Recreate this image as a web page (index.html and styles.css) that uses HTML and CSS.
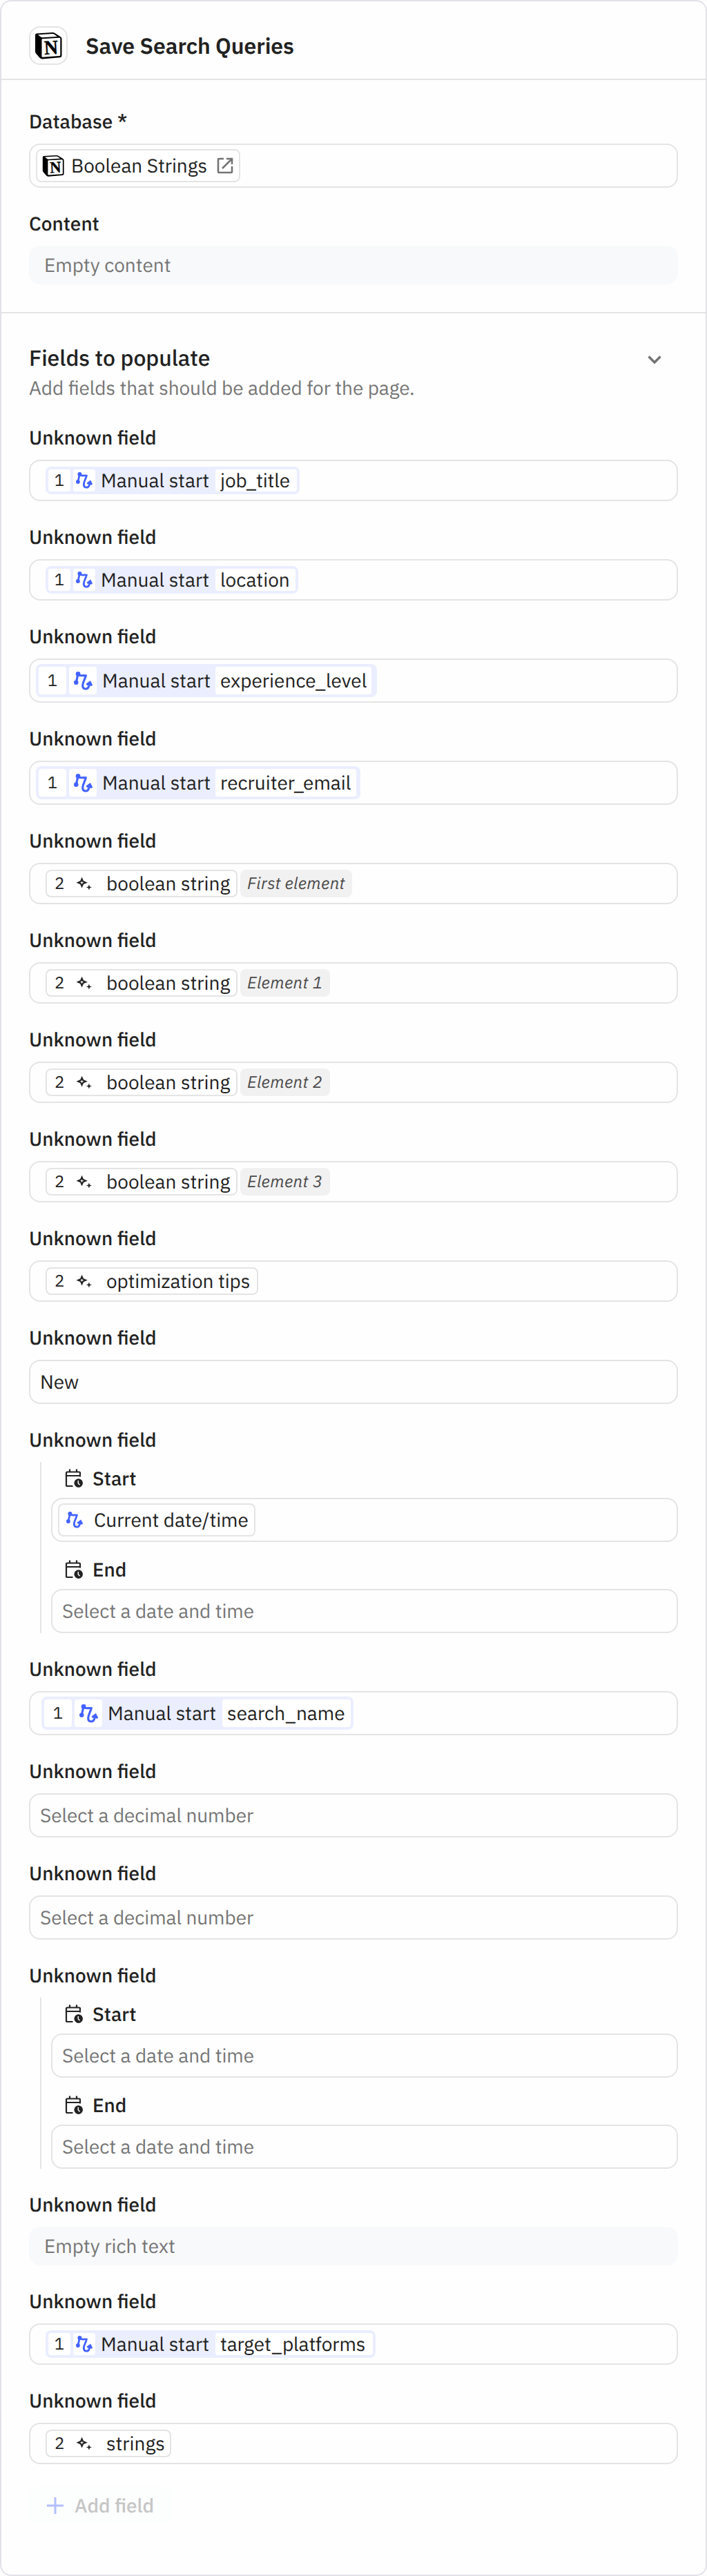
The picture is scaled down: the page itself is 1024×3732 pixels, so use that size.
FILE: index.html
```
<!DOCTYPE html>
<html lang="en">
<head>
    <meta charset="UTF-8">
    <meta name="viewport" content="width=device-width, initial-scale=1.0">
    <title>Save Search Queries</title>
    <link rel="stylesheet" href="styles.css">
</head>
<body>
    <div class="card">
        <header class="card-header">
            <div class="app-icon">
                <svg width="40" height="41" viewBox="0 0 40 41">
                    <use href="#notion"/>
                    <text x="14" y="32.500" class="notion-letter" textLength="20" lengthAdjust="spacingAndGlyphs" transform="rotate(-3 24 22)">N</text>
                </svg>
            </div>
            <h1>Save Search Queries</h1>
        </header>

        <section class="section">
            <div class="field">
                <div class="label">Database *</div>
                <div class="input">
                    <div class="chip database">
                        <svg width="32" height="33" viewBox="0 0 40 41">
                            <use href="#notion"/>
                            <text x="14" y="32.500" class="notion-letter" textLength="20" lengthAdjust="spacingAndGlyphs" transform="rotate(-3 24 22)">N</text>
                        </svg>
                        <span>Boolean Strings</span>
                        <svg class="external" width="24" height="24" viewBox="0 0 24 24"><path d="M10 2 H3 Q2 2 2 3 V21 Q2 22 3 22 H21 Q22 22 22 21 V13 M14 2 H22 V10 M21.500 2.500 L8 16"/></svg>
                    </div>
                </div>
            </div>
            <div class="field">
                <div class="label">Content</div>
                <div class="empty">Empty content</div>
            </div>
        </section>

        <section class="section">
            <div class="section-head">
                <div>
                    <h2>Fields to populate</h2>
                    <p>Add fields that should be added for the page.</p>
                </div>
                <svg class="chevron" width="20" height="14" viewBox="0 0 20 14"><path d="M1.500 1.500 L10 10 L18.500 1.500"/></svg>
            </div>

            <div class="field">
                <div class="label">Unknown field</div>
                <div class="input small">
                    <div class="token">
                        <span class="num">1</span>
                        <span class="ico"><svg width="24" height="28"><use href="#route"/></svg></span>
                        <span class="name">Manual start</span>
                        <span class="value job-title">job_title</span>
                    </div>
                </div>
            </div>
            <div class="field">
                <div class="label">Unknown field</div>
                <div class="input small">
                    <div class="token">
                        <span class="num">1</span>
                        <span class="ico"><svg width="24" height="28"><use href="#route"/></svg></span>
                        <span class="name">Manual start</span>
                        <span class="value location">location</span>
                    </div>
                </div>
            </div>
            <div class="field">
                <div class="label">Unknown field</div>
                <div class="input">
                    <div class="token large">
                        <span class="num">1</span>
                        <span class="ico"><svg width="27" height="31"><use href="#route"/></svg></span>
                        <span class="name">Manual start</span>
                        <span class="value experience">experience_level</span>
                    </div>
                </div>
            </div>
            <div class="field">
                <div class="label">Unknown field</div>
                <div class="input">
                    <div class="token large">
                        <span class="num">1</span>
                        <span class="ico"><svg width="27" height="31"><use href="#route"/></svg></span>
                        <span class="name">Manual start</span>
                        <span class="value recruiter">recruiter_email</span>
                    </div>
                </div>
            </div>

            <div class="field">
                <div class="label">Unknown field</div>
                <div class="input small">
                    <div class="chip result">
                        <span class="num">2</span>
                        <svg width="22" height="19"><use href="#sparkle"/></svg>
                        <span>boolean string</span>
                    </div>
                    <span class="badge first">First element</span>
                </div>
            </div>
            <div class="field">
                <div class="label">Unknown field</div>
                <div class="input small">
                    <div class="chip result">
                        <span class="num">2</span>
                        <svg width="22" height="19"><use href="#sparkle"/></svg>
                        <span>boolean string</span>
                    </div>
                    <span class="badge">Element 1</span>
                </div>
            </div>
            <div class="field">
                <div class="label">Unknown field</div>
                <div class="input small">
                    <div class="chip result">
                        <span class="num">2</span>
                        <svg width="22" height="19"><use href="#sparkle"/></svg>
                        <span>boolean string</span>
                    </div>
                    <span class="badge">Element 2</span>
                </div>
            </div>
            <div class="field">
                <div class="label">Unknown field</div>
                <div class="input small">
                    <div class="chip result">
                        <span class="num">2</span>
                        <svg width="22" height="19"><use href="#sparkle"/></svg>
                        <span>boolean string</span>
                    </div>
                    <span class="badge">Element 3</span>
                </div>
            </div>
            <div class="field">
                <div class="label">Unknown field</div>
                <div class="input small">
                    <div class="chip result tips">
                        <span class="num">2</span>
                        <svg width="22" height="19"><use href="#sparkle"/></svg>
                        <span>optimization tips</span>
                    </div>
                </div>
            </div>

            <div class="field">
                <div class="label">Unknown field</div>
                <div class="input text">New</div>
            </div>

            <div class="field">
                <div class="label">Unknown field</div>
                <div class="range">
                    <div>
                        <div class="sub-label"><svg width="27" height="27"><use href="#calendar"/></svg>Start</div>
                        <div class="input">
                            <div class="chip date">
                                <svg width="24" height="24"><use href="#route"/></svg>
                                <span>Current date/time</span>
                            </div>
                        </div>
                    </div>
                    <div>
                        <div class="sub-label"><svg width="27" height="27"><use href="#calendar"/></svg>End</div>
                        <div class="input text placeholder">Select a date and time</div>
                    </div>
                </div>
            </div>

            <div class="field">
                <div class="label">Unknown field</div>
                <div class="input">
                    <div class="token large inset">
                        <span class="num">1</span>
                        <span class="ico"><svg width="27" height="31"><use href="#route"/></svg></span>
                        <span class="name">Manual start</span>
                        <span class="value search-name">search_name</span>
                    </div>
                </div>
            </div>
            <div class="field">
                <div class="label">Unknown field</div>
                <div class="input text placeholder">Select a decimal number</div>
            </div>
            <div class="field">
                <div class="label">Unknown field</div>
                <div class="input text placeholder">Select a decimal number</div>
            </div>

            <div class="field">
                <div class="label">Unknown field</div>
                <div class="range">
                    <div>
                        <div class="sub-label"><svg width="27" height="27"><use href="#calendar"/></svg>Start</div>
                        <div class="input text placeholder">Select a date and time</div>
                    </div>
                    <div>
                        <div class="sub-label"><svg width="27" height="27"><use href="#calendar"/></svg>End</div>
                        <div class="input text placeholder">Select a date and time</div>
                    </div>
                </div>
            </div>

            <div class="field">
                <div class="label">Unknown field</div>
                <div class="empty">Empty rich text</div>
            </div>
            <div class="field">
                <div class="label">Unknown field</div>
                <div class="input small">
                    <div class="token">
                        <span class="num">1</span>
                        <span class="ico"><svg width="24" height="28"><use href="#route"/></svg></span>
                        <span class="name">Manual start</span>
                        <span class="value platforms">target_platforms</span>
                    </div>
                </div>
            </div>
            <div class="field">
                <div class="label">Unknown field</div>
                <div class="input small">
                    <div class="chip result strings">
                        <span class="num">2</span>
                        <svg width="22" height="19"><use href="#sparkle"/></svg>
                        <span>strings</span>
                    </div>
                </div>
            </div>

            <button class="add-btn" disabled>
                <svg width="24" height="24" viewBox="0 0 24 24"><path d="M12 0 V24 M0 12 H24"/></svg>
                <span>Add field</span>
            </button>
        </section>
    </div>

    <!-- icons -->
    <svg width="0" height="0">
        <symbol id="notion" viewBox="0 0 40 41">
            <path d="M1 4.500 Q1 2.800 3 2.500 L26 1 Q28 .9 29.500 2 L38 7.500 Q39.500 8.500 39.500 10.500 V34.500 Q39.500 37 37 37.300 L11.500 39.500 Q9 39.700 7.500 37.700 L2 31.500 Q1 30.200 1 28.500 Z" fill="#000"/>
            <path d="M5 4.300 L26 2.900 Q27.300 2.900 28.300 3.600 L33 6.900 L12 8.300 Q10.300 8.400 9 7.500 Z" fill="#fff"/>
            <path d="M10.500 11.500 Q10.500 10.300 11.700 10.200 L36 8.800 Q37.300 8.800 37.300 10 V33.500 Q37.300 35 36 35.100 L12 36.800 Q10.500 36.900 10.500 35.400 Z" fill="#fff"/>
        </symbol>
        <symbol id="route" viewBox="0 0 24 24">
            <circle cx="5.400" cy="3" r="3"/>
            <circle cx="2.900" cy="14" r="2.900"/>
            <path d="M5.300 3 L3 14 M5.300 3.600 C8.500 6.600 10.500 4.200 15.300 5.200 C14.500 9.500 11.400 13.500 11.300 17.700 C11.300 23.300 17.800 23.700 19.300 18.800 L20.300 14.800 M16.300 16.900 L20.700 13.700 L23 18.300" fill="none" stroke="currentColor" stroke-width="2.800"/>
        </symbol>
        <symbol id="sparkle" viewBox="0 0 22 19">
            <path d="M7.600 2.500 L9.200 6.100 L13 7.700 L9.200 9.300 L7.600 12.900 L6 9.300 L2.200 7.700 L6 6.100 Z" fill="none" stroke="currentColor" stroke-width="2.200"/>
            <path d="M17.900 10.500 L19 13.400 L22 14.500 L19 15.600 L17.900 18.500 L16.800 15.600 L13.800 14.500 L16.800 13.400 Z"/>
        </symbol>
        <symbol id="calendar" viewBox="0 0 27 27">
            <path d="M11.500 25 H3.500 Q2 25 2 23.500 V6 Q2 4.500 3.500 4.500 H20.500 Q22 4.500 22 6 V11.500 M2 10 H22 M7 .5 V4.500 M17 .5 V4.500" fill="none" stroke="currentColor" stroke-width="2.200"/>
            <circle cx="19.700" cy="20.600" r="6.300"/>
            <path d="M19.300 17 V21 L21.600 23.300" fill="none" stroke="#fff" stroke-width="1.500"/>
        </symbol>
    </svg>
</body>
</html>
```
FILE: styles.css
```
* {
    box-sizing: border-box;
}
body {
    margin: 0;
    background-color: #fff;
    font-family: "IBM Plex Sans", Roboto, sans-serif;
    font-size: 28px;
    line-height: 40px;
    color: #222;
    text-rendering: geometricPrecision;
    font-feature-settings: "liga" 1;
}
svg {
    display: block;
    flex: none;
    fill: currentColor;
}
.notion-letter {
    font-family: "Liberation Serif", serif;
    font-weight: bold;
    font-size: 29px;
    fill: #000;
    stroke: #000;
    stroke-width: 0.5px;
}
.card {
    height: 3732px;
    border: 2px solid #e2e1ea;
    border-radius: 16px;
    background-color: #fefefe;
}
.card-header {
    display: flex;
    align-items: center;
    gap: 26px;
    height: 114px;
    padding: 16px 40px 0;
    border-bottom: 2px solid #e4e4e4;
}
.app-icon {
    display: flex;
    align-items: center;
    justify-content: center;
    width: 56px;
    height: 56px;
    border: 2px solid #e4e4e4;
    border-radius: 16px;
}
h1, h2, p {
    margin: 0;
}
h1 {
    font-size: 32px;
    font-weight: 600;
    letter-spacing: -0.12px;
}
.section {
    display: flex;
    flex-direction: column;
    gap: 32px;
    padding: 40px;
}
.section + .section {
    border-top: 2px solid #e4e4e4;
}
.section-head {
    display: flex;
    justify-content: space-between;
}
h2 {
    font-size: 32px;
    font-weight: 500;
    line-height: 48px;
    letter-spacing: -0.05px;
}
.section-head p {
    color: #767676;
    letter-spacing: -0.09px;
}
.chevron {
    margin: 21px 24px 0 0;
}
.chevron path, .external path {
    fill: none;
    stroke: #737373;
    stroke-width: 3.4;
}
.external path {
    stroke-width: 2.6;
}
.label {
    margin-bottom: 12px;
    font-weight: 500;
}
.input {
    display: flex;
    align-items: center;
    gap: 4px;
    height: 64px;
    padding: 0 8px;
    border: 2px solid #e4e4e4;
    border-radius: 16px;
}
.input.small {
    height: 60px;
    padding: 0 22px;
}
.input.text {
    padding: 0 14px;
    letter-spacing: -0.09px;
}
.input.placeholder, .empty {
    color: #767676;
}
.empty {
    height: 56px;
    padding: 8px 22px;
    border-radius: 16px;
    background-color: #f8f9fb;
}

/* step output tokens */
.token {
    display: flex;
    gap: 4px;
    height: 40px;
    padding: 4px;
    border-radius: 8px;
    background-color: #ebeeff;
    line-height: 32px;
}
.token span {
    flex: none;
}
.token .num, .ico, .value {
    border-radius: 4px;
    background-color: #fff;
}
.num {
    font-size: 24px;
    text-align: center;
}
.token .num, .ico {
    width: 32px;
}
.token .num {
    line-height: 30px;
}
.ico {
    display: flex;
    align-items: center;
    justify-content: center;
    color: #4362ff;
}
.name {
    width: 166px;
    padding-left: 4px;
}
.value {
    padding-left: 7px;
}
.token.large {
    height: 48px;
    line-height: 40px;
}
.large .num, .large .ico {
    width: 40px;
}
.large .num {
    line-height: 38px;
}
.large .name {
    width: 164px;
}
.token.inset {
    margin-left: 8px;
}
.inset .name {
    width: 166px;
}
.job-title {
    width: 118px;
    letter-spacing: -0.1px;
}
.location {
    width: 116px;
}
.experience {
    width: 226px;
    margin-right: 4px;
}
.recruiter {
    width: 204px;
    margin-right: 2px;
}
.search-name {
    width: 186px;
}
.platforms {
    width: 228px;
    letter-spacing: -0.1px;
}

/* outlined chips */
.chip {
    display: flex;
    align-items: center;
    height: 48px;
    border: 2px solid #e4e4e4;
    border-radius: 8px;
    background-color: #fff;
    white-space: nowrap;
}
.database {
    width: 296px;
    padding-left: 7px;
}
.database span {
    width: 221px;
    padding-left: 10px;
    letter-spacing: -0.05px;
}
.date {
    width: 286px;
    padding-left: 10px;
    color: #4362ff;
}
.date span {
    margin-left: 16px;
    color: #222;
    letter-spacing: -0.08px;
}
.result {
    width: 278px;
    height: 40px;
    padding-left: 11px;
}
.result .num {
    width: 14px;
    margin-bottom: 2px;
}
.result svg {
    margin: 0 21px 0 18px;
}
.tips {
    width: 308px;
    letter-spacing: -0.08px;
}
.strings {
    width: 182px;
}
.badge {
    width: 130px;
    height: 40px;
    padding-left: 10px;
    border-radius: 8px;
    background-color: #f1f1f1;
    color: #4a4a4a;
    font-size: 24px;
    font-style: italic;
    line-height: 38px;
    letter-spacing: 0.35px;
}
.first {
    width: 162px;
}

/* start / end dates */
.range {
    display: flex;
    flex-direction: column;
    gap: 16px;
    margin-left: 16px;
    padding-left: 14px;
    border-left: 2px solid #e4e4e4;
}
.sub-label {
    display: flex;
    align-items: center;
    gap: 13px;
    height: 48px;
    margin-bottom: 4px;
    padding-left: 20px;
    font-weight: 500;
}
.sub-label svg {
    margin-top: -1px;
}
.add-btn {
    display: flex;
    align-items: center;
    align-self: flex-start;
    gap: 16px;
    width: 208px;
    height: 56px;
    padding: 0 0 0 26px;
    border: none;
    border-radius: 16px;
    background-color: #fcfdfd;
    color: #c6c6c6;
    font: inherit;
    font-weight: 500;
    text-rendering: inherit;
}
.add-btn path {
    stroke: #b4bfff;
    stroke-width: 3;
}
```
